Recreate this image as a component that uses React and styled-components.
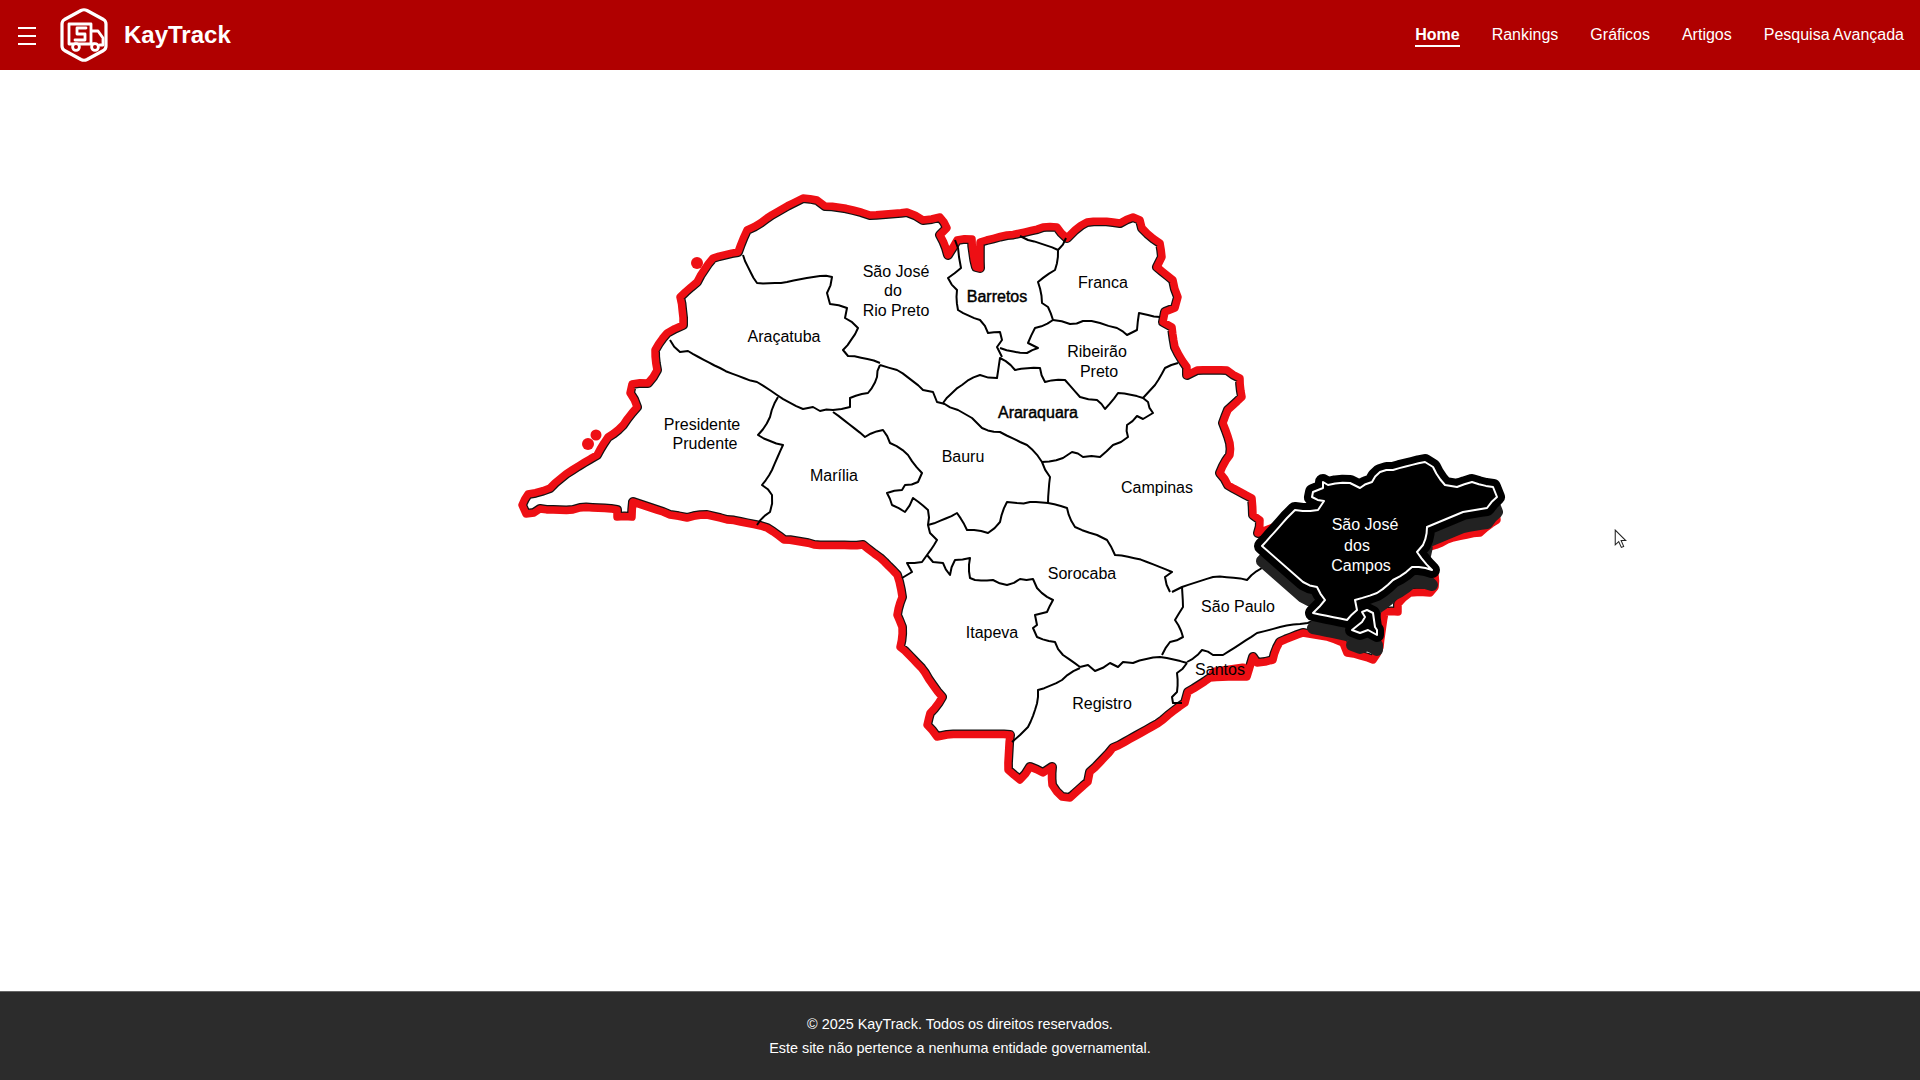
import styled, { createGlobalStyle } from 'styled-components';

const GlobalStyle = createGlobalStyle`
  html, body {
    margin: 0;
    padding: 0;
    background: #fff;
    font-family: "Liberation Sans", Arial, sans-serif;
  }
`;

// turns a hand-traced polyline into a path, breaking long segments into small
// steps so the borders get the rough look of the scanned map
const toPath = (pts, amp = 0, closed = false) => {
  const list = pts.trim().split(/\s+/).map((p) => p.split(',').map(Number));
  const out = [];
  list.forEach(([x, y], i) => {
    out.push([x, y]);
    const next = list[i + 1];
    if (!next || !amp) return;
    const dx = next[0] - x;
    const dy = next[1] - y;
    const len = Math.hypot(dx, dy);
    const steps = Math.floor(len / 6);
    for (let s = 1; s < steps; s++) {
      const off = Math.sin(x * 12.9 + y * 78.2 + s * 37.7) * amp;
      out.push([x + (dx * s) / steps - (dy / len) * off, y + (dy * s) / steps + (dx / len) * off]);
    }
  });
  return 'M' + out.map((p) => p[0].toFixed(1) + ',' + p[1].toFixed(1)).join('L') + (closed ? 'Z' : '');
};

// state border, clockwise from the west tip
const OUTER = toPath(`
  526,514 522,505 528,494 550,488 572,470 597,455 608,437 623,425 637,407 630,393 632,384 648,383 657,370 655,350
  667,333 683,325 680,297 697,282 713,258 738,252 747,230 767,218 793,203 803,198 817,200 825,206 853,210 870,215
  907,212 923,220 940,217 947,228 940,235 948,255 957,240 972,239 976,267 980,268 980,242 1007,235 1043,227 1057,227
  1067,238 1075,230 1087,222 1113,222 1120,223 1133,217 1140,220 1142,228 1160,243 1162,257 1157,267 1173,280 1178,297
  1175,308 1165,312 1163,322 1172,327 1175,347 1187,367 1187,375 1197,370 1227,370 1240,378 1242,397 1228,410 1223,423
  1230,443 1230,455 1220,473 1228,485 1252,498 1253,515 1260,520 1258,533 1290,520 1400,500 1495,505 1497,520 1480,533
  1447,540 1430,547 1420,560 1435,575 1435,587 1430,593 1410,593 1398,604 1398,612 1385,612 1380,647 1373,660 1347,653
  1343,643 1327,637 1303,633 1280,642 1273,660 1257,663 1253,657 1247,677 1210,678 1188,692 1185,703 1163,720 1113,748
  1090,772 1088,782 1070,798 1062,797 1052,785 1052,767 1043,773 1030,767 1020,780 1008,770 1010,735 947,735 937,737
  927,725 930,713 942,697 925,673 900,647 902,627 897,615 902,597 897,575 880,558 863,545 814,545 784,540 767,528
  727,520 707,515 687,518 670,515 663,512 633,502 632,517 617,517 617,510 580,508 573,510 540,509 534,513
`, 0.8, true);

const BORDERS = [
  '743,255 757,283 787,282 820,276 832,277 827,293 830,304 847,308 845,318 858,328 843,350 848,356 880,363',
  '670,340 680,352 688,351 720,368 757,382 777,395 803,409 813,407 820,411 833,410 850,407 850,398 868,393 877,377 880,365',
  '778,397 770,417 758,435 783,445 772,470 762,485 772,495 770,512 757,525',
  '833,412 865,437 883,430 890,443 908,455 922,473 918,482 905,485 902,490 887,493 892,505 905,512 913,498 928,510 928,525 930,533 937,540 927,555 922,562 907,563 912,572 902,578',
  '927,555 933,562 943,563 950,575 955,560 970,558 970,578 975,580 993,580 1007,585 1020,579 1033,579 1037,588 1053,600 1047,612 1035,615 1037,625 1033,628 1037,637 1055,642 1063,655 1080,667',
  '928,525 957,513 967,530 988,533 1000,522 1007,502 1017,503 1030,502 1048,503 1067,508 1075,527 1097,535 1107,540 1115,555 1147,562 1172,572 1165,577 1170,592',
  '1042,462 1050,477 1048,503',
  '880,365 897,370 923,390 933,392 937,402 945,404',
  '943,403 962,385 980,375 997,378 1000,358 1015,370 1040,368 1045,382 1065,380 1080,397 1097,400 1105,409 1118,393 1143,398 1148,402 1153,413 1143,419 1137,416 1127,425 1128,437 1113,445 1100,457 1083,457 1072,452 1063,458 1042,462 1027,445 1000,432 982,428 972,418 958,410 943,403',
  '955,240 959,257 961,268 948,278 957,290 958,310 980,320 988,333 1000,332 1002,340 997,347 1002,357',
  '1020,236 1028,240 1058,250 1055,270 1038,282 1042,303 1048,307 1053,320',
  '1066,238 1058,250',
  '1000,348 1027,353 1038,348 1028,343 1035,328 1053,320',
  '1053,320 1070,324 1083,321 1100,323 1117,328 1127,335 1137,330 1139,313 1148,315 1160,317',
  '1178,363 1165,368 1155,385 1143,398',
  '1172,592 1182,587 1213,577 1247,580 1262,568',
  '1182,587 1183,607 1175,620 1183,637 1170,642 1162,655',
  '1080,667 1088,665 1095,671 1110,663 1118,667 1123,662 1133,663 1160,657 1187,663',
  '1080,668 1062,680 1038,690 1035,710 1028,727 1020,735 1012,742',
  '1187,663 1177,673 1177,692 1172,697 1173,703 1182,703',
  '1187,662 1202,650 1213,655 1223,655 1257,633 1280,627 1300,624 1315,620',
].map((pts) => toPath(pts, 1.1));

const SJC = toPath(`
  1262,546 1287,518 1295,510 1318,510 1324,501 1312,497 1313,492 1323,488 1323,482 1328,485 1350,483 1360,488 1372,482
  1380,472 1393,470 1425,462 1433,467 1445,485 1457,487 1472,482 1493,487 1497,497 1487,508 1463,512 1427,527 1423,545
  1417,552 1432,570 1412,567 1393,580 1377,593 1355,600 1357,610 1347,620 1313,613 1325,600 1317,587 1303,582
`, 1, true);

const SJC_ISLAND = toPath('1362,612 1367,610 1373,613 1375,627 1377,630 1377,635 1368,630 1360,633 1352,630 1362,622 1365,617', 0, true);

const LABELS = [
  { x: 896, y: 272, text: 'São José' },
  { x: 893, y: 291, text: 'do' },
  { x: 896, y: 311, text: 'Rio Preto' },
  { x: 784, y: 337, text: 'Araçatuba' },
  { x: 702, y: 425, text: 'Presidente' },
  { x: 705, y: 444, text: 'Prudente' },
  { x: 834, y: 476, text: 'Marília' },
  { x: 963, y: 457, text: 'Bauru' },
  { x: 997, y: 297, text: 'Barretos', bold: true },
  { x: 1103, y: 283, text: 'Franca' },
  { x: 1097, y: 352, text: 'Ribeirão' },
  { x: 1099, y: 372, text: 'Preto' },
  { x: 1038, y: 413, text: 'Araraquara', bold: true },
  { x: 1157, y: 488, text: 'Campinas' },
  { x: 1082, y: 574, text: 'Sorocaba' },
  { x: 1238, y: 607, text: 'São Paulo' },
  { x: 992, y: 633, text: 'Itapeva' },
  { x: 1102, y: 704, text: 'Registro' },
  { x: 1220, y: 670, text: 'Santos' },
  { x: 1365, y: 525, text: 'São José', light: true },
  { x: 1357, y: 546, text: 'dos', light: true },
  { x: 1361, y: 566, text: 'Campos', light: true },
];

const LINKS = ['Home', 'Rankings', 'Gráficos', 'Artigos', 'Pesquisa Avançada'];

const Logo = () => (
  <LogoSvg viewBox="0 0 50 56" fill="none" stroke="#fff" strokeLinejoin="round" strokeLinecap="round">
    <path
      d="M22 3.5 Q25 2 28 3.5 L44.5 12.5 Q47 14 47 17 V39 Q47 42 44.5 43.5 L28 52.5 Q25 54 22 52.5 L5.5 43.5 Q3 42 3 39 V17 Q3 14 5.5 12.5 Z"
      strokeWidth="3.2"
    />
    <path d="M35 37 H10 V17 H32 V37 M32 24 H39 L44 31 V38 H41" strokeWidth="2.8" />
    <path d="M27 21 H18 V27 H26 V33 H16" strokeWidth="2.8" />
    <circle cx="17" cy="40" r="3.4" fill="#b00000" strokeWidth="2.8" />
    <circle cx="36" cy="40" r="3.4" fill="#b00000" strokeWidth="2.8" />
  </LogoSvg>
);

const RegionMap = () => (
  <MapSvg viewBox="510 185 1000 620">
    <defs>
      <clipPath id="state">
        <path d={OUTER} />
      </clipPath>
    </defs>

    <path d={OUTER} fill="#fff" />
    <path d={OUTER} fill="none" stroke="#111" strokeWidth="10" strokeLinejoin="round" clipPath="url(#state)" />
    <path d={OUTER} fill="none" stroke="#ee0f14" strokeWidth="7.5" strokeLinejoin="round" />
    <path d="M1215,674 L1243,670" stroke="#ee0f14" strokeWidth="13" strokeLinecap="round" />
    <circle cx="697" cy="263" r="6" fill="#ee0f14" />
    <circle cx="588" cy="444" r="6" fill="#ee0f14" />
    <circle cx="596" cy="435" r="5.5" fill="#ee0f14" />

    {BORDERS.map((d, i) => (
      <path key={i} d={d} fill="none" stroke="#000" strokeWidth="2" strokeLinejoin="round" />
    ))}

    <g transform="translate(0 15)">
      <path d={SJC} fill="#222" stroke="#222" strokeWidth="12" strokeLinejoin="round" />
      <path d={SJC_ISLAND} fill="#222" stroke="#222" strokeWidth="12" strokeLinejoin="round" />
    </g>
    <path d={SJC} fill="#000" stroke="#000" strokeWidth="16" strokeLinejoin="round" />
    <path d={SJC_ISLAND} fill="#000" stroke="#000" strokeWidth="14" strokeLinejoin="round" />
    <path d={SJC} fill="#000" stroke="#fff" strokeWidth="2" strokeLinejoin="round" />
    <path d={SJC_ISLAND} fill="#000" stroke="#fff" strokeWidth="2" strokeLinejoin="round" />

    {LABELS.map((l) => (
      <MapLabel key={l.text + l.x} x={l.x} y={l.y + 5} $bold={l.bold} $light={l.light}>
        {l.text}
      </MapLabel>
    ))}
  </MapSvg>
);

const App = () => (
  <Page>
    <GlobalStyle />
    <Header>
      <Brand>
        <MenuButton aria-label="Menu">
          <span />
          <span />
          <span />
        </MenuButton>
        <Logo />
        <BrandName>KayTrack</BrandName>
      </Brand>
      <Nav>
        {LINKS.map((link, i) => (
          <NavLink key={link} href="#" $active={i === 0}>
            {link}
          </NavLink>
        ))}
      </Nav>
    </Header>
    <Main>
      <RegionMap />
      <Cursor viewBox="0 0 12 19">
        <path d="M1 1 V15 L4.3 12 L6.8 17.5 L9 16.5 L6.6 11 H11 Z" fill="#fff" stroke="#222" strokeWidth="1" />
      </Cursor>
    </Main>
    <Footer>
      <FooterLine>© 2025 KayTrack. Todos os direitos reservados.</FooterLine>
      <FooterLine>Este site não pertence a nenhuma entidade governamental.</FooterLine>
    </Footer>
  </Page>
);

const Page = styled.div`
  display: flex;
  flex-direction: column;
  height: 100vh;
  overflow: hidden;
`;

const Header = styled.header`
  display: flex;
  align-items: center;
  justify-content: space-between;
  flex: 0 0 70px;
  padding: 0 16px 0 18px;
  background-color: #b00000;
  color: #fff;
`;

const Brand = styled.div`
  display: flex;
  align-items: center;
`;

const MenuButton = styled.button`
  display: flex;
  flex-direction: column;
  gap: 6px;
  width: 18px;
  margin-top: 2px;
  padding: 0;
  background: none;
  border: none;
  cursor: pointer;

  span {
    display: block;
    height: 2px;
    background-color: #fff;
  }
`;

const LogoSvg = styled.svg`
  width: 50px;
  height: 56px;
  margin-left: 23px;
`;

const BrandName = styled.span`
  margin-left: 15px;
  font-size: 24px;
  font-weight: 700;
`;

const Nav = styled.nav`
  display: flex;
  gap: 32px;
  margin-top: 2px;
`;

const NavLink = styled.a`
  padding-bottom: 1px;
  color: #fff;
  font-size: 16px;
  font-weight: ${(props) => (props.$active ? 700 : 400)};
  text-decoration: none;
  border-bottom: 2px solid ${(props) => (props.$active ? '#fff' : 'transparent')};
`;

const Main = styled.main`
  position: relative;
  flex: 1;
  padding: 115px 0 0 510px;
`;

const MapSvg = styled.svg`
  display: block;
  width: 1000px;
  height: 620px;
  overflow: visible;
`;

const MapLabel = styled.text`
  fill: ${(props) => (props.$light ? '#fff' : '#000')};
  stroke: ${(props) => (props.$bold ? '#000' : 'none')};
  stroke-width: 0.45px;
  font-family: "Liberation Sans", Arial, sans-serif;
  font-size: 16px;
  text-anchor: middle;
`;

const Cursor = styled.svg`
  position: absolute;
  top: 459px;
  left: 1614px;
  width: 13px;
  height: 20px;
`;

const Footer = styled.footer`
  flex: 0 0 89px;
  box-sizing: border-box;
  padding-top: 24px;
  background-color: #2c2c2c;
  border-top: 1px solid #666;
  color: #fff;
  text-align: center;
`;

const FooterLine = styled.p`
  margin: 0 0 8px;
  font-size: 14.4px;
  line-height: 16px;
`;

export default App;
